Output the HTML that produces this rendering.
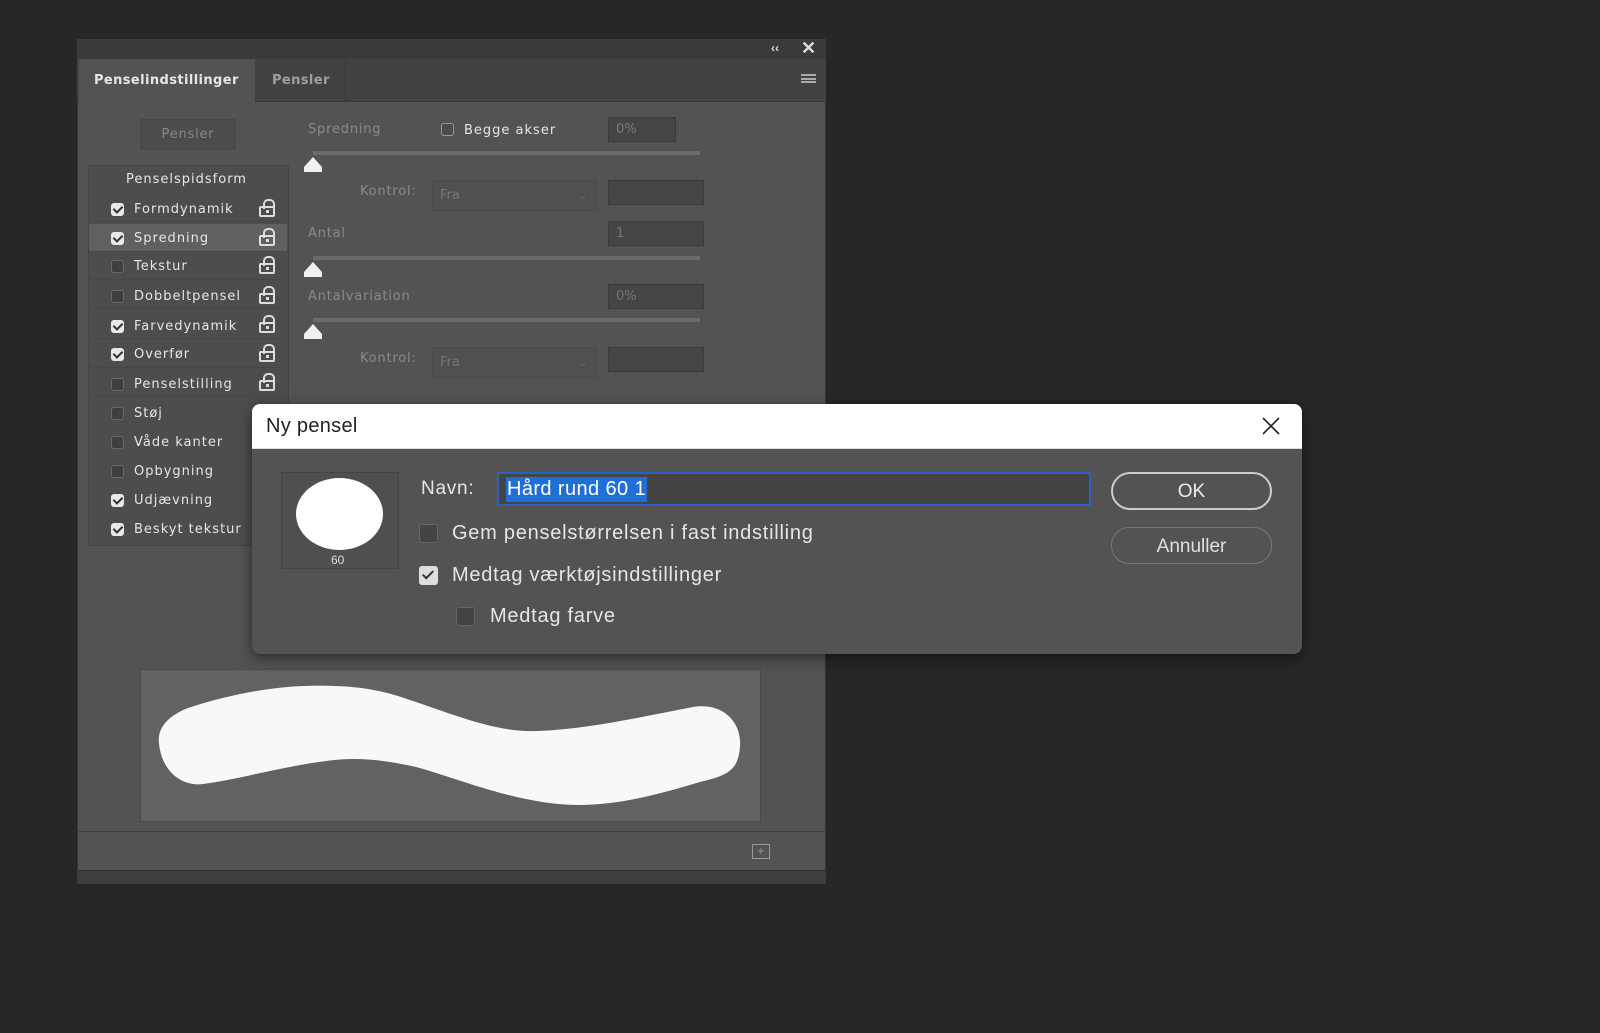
<!DOCTYPE html>
<html><head><meta charset="utf-8"><style>
*{margin:0;padding:0;box-sizing:border-box}
body{width:1600px;height:1033px;background:#272727;font-family:"Liberation Sans",sans-serif;position:relative;overflow:hidden}
.a{position:absolute}
.t{color:#e6e6e6;font-size:13px;letter-spacing:1px;white-space:nowrap;font-family:"DejaVu Sans",sans-serif;margin-top:1px}
.dim{color:#8a8a8a;font-size:13px;letter-spacing:0.8px;white-space:nowrap;font-family:"DejaVu Sans",sans-serif;margin-top:1px}
.cb{position:absolute;width:13px;height:13px;border-radius:3px;background:#3e3e3e;border:1px solid #6a6a6a}
.cbk{position:absolute;width:13px;height:13px;border-radius:3px;background:#e8e8e8}
.cbk:after{content:"";position:absolute;left:4px;top:1px;width:4px;height:7px;border:solid #333;border-width:0 2px 2px 0;transform:rotate(45deg)}
.row{position:absolute;left:89px;width:198px;height:28px;border-bottom:1px solid #474747}
.lock{position:absolute;left:164px;width:16px;height:11px;border:2px solid #ddd;border-radius:2px}
.lock:before{content:"";position:absolute;left:2px;top:-9px;width:8px;height:8px;border:2px solid #ddd;border-bottom:none;border-radius:5px 5px 0 0}
.lock:after{content:"";position:absolute;left:5px;top:2px;width:3px;height:3px;background:#ddd}
.inp{position:absolute;background:#454545;border:1px solid #3a3a3a;color:#777;font-size:13px;padding:4px 7px;font-family:"DejaVu Sans",sans-serif}
.track{position:absolute;left:313px;width:387px;height:4px;background:#6b6b6b}
.thumb{position:absolute;left:304px;width:0;height:0;border-left:9px solid transparent;border-right:9px solid transparent;border-bottom:10px solid #f0f0f0}
.thumb:after{content:"";position:absolute;left:-9px;top:10px;width:18px;height:5px;background:#f0f0f0}
.dt{position:absolute;color:#e6e6e6;font-size:20px;letter-spacing:0.75px;white-space:nowrap}
</style></head><body>
<div class="a" style="left:77px;top:39px;width:749px;height:845px;background:#535353;border:1px solid #333"></div>
<div class="a" style="left:77px;top:39px;width:749px;height:20px;background:#3b3b3b"></div>
<div class="a" style="left:771px;top:41px;color:#ddd;font-size:12px;font-weight:bold">‹‹</div>
<div class="a" style="left:801px;top:38px;color:#ddd;font-size:18px;font-weight:bold">✕</div>
<div class="a" style="left:77px;top:59px;width:749px;height:43px;background:#424242;border-bottom:1px solid #383838"></div>
<div class="a" style="left:79px;top:59px;width:176px;height:44px;background:#535353"></div>
<div class="a t" style="left:94px;top:72px;font-weight:bold;letter-spacing:0.4px">Penselindstillinger</div>
<div class="a" style="left:256px;top:59px;width:90px;height:43px;border-right:1px solid #383838"></div>
<div class="a t" style="left:272px;top:72px;color:#a0a0a0;font-weight:bold;letter-spacing:0.4px">Pensler</div>
<div class="a" style="left:801px;top:74px;width:15px;height:9px;border-top:2px solid #aaa;border-bottom:2px solid #aaa"><div style="margin-top:1.5px;height:2px;background:#aaa"></div></div>

<div class="a dim" style="left:140px;top:118px;width:96px;height:31px;background:#4c4c4c;border:1px solid #474747;color:#888;text-align:center;line-height:29px">Pensler</div>

<div class="a" style="left:88px;top:165px;width:201px;height:381px;background:#4d4d4d;border:1px solid #464646"></div>
<div class="a t" style="left:126px;top:171px">Penselspidsform</div>
<div class="row" style="top:194px"></div>
<div class="row" style="top:224px;background:#606060"></div>
<div class="row" style="top:252px"></div><div class="row" style="top:281px"></div><div class="row" style="top:311px"></div><div class="row" style="top:340px"></div><div class="row" style="top:369px"></div>

<div class="cbk" style="left:111px;top:203px"></div><div class="a t" style="left:134px;top:201px">Formdynamik</div><div class="lock" style="left:259px;top:206px"></div>
<div class="cbk" style="left:111px;top:232px"></div><div class="a t" style="left:134px;top:230px">Spredning</div><div class="lock" style="left:259px;top:235px"></div>
<div class="cb" style="left:111px;top:260px"></div><div class="a t" style="left:134px;top:258px">Tekstur</div><div class="lock" style="left:259px;top:263px"></div>
<div class="cb" style="left:111px;top:290px"></div><div class="a t" style="left:134px;top:288px">Dobbeltpensel</div><div class="lock" style="left:259px;top:293px"></div>
<div class="cbk" style="left:111px;top:320px"></div><div class="a t" style="left:134px;top:318px">Farvedynamik</div><div class="lock" style="left:259px;top:322px"></div>
<div class="cbk" style="left:111px;top:348px"></div><div class="a t" style="left:134px;top:346px">Overfør</div><div class="lock" style="left:259px;top:351px"></div>
<div class="cb" style="left:111px;top:378px"></div><div class="a t" style="left:134px;top:376px">Penselstilling</div><div class="lock" style="left:259px;top:380px"></div>
<div class="cb" style="left:111px;top:407px"></div><div class="a t" style="left:134px;top:405px">Støj</div>
<div class="cb" style="left:111px;top:436px"></div><div class="a t" style="left:134px;top:434px">Våde kanter</div>
<div class="cb" style="left:111px;top:465px"></div><div class="a t" style="left:134px;top:463px">Opbygning</div>
<div class="cbk" style="left:111px;top:494px"></div><div class="a t" style="left:134px;top:492px">Udjævning</div>
<div class="cbk" style="left:111px;top:523px"></div><div class="a t" style="left:134px;top:521px">Beskyt tekstur</div>

<div class="a dim" style="left:308px;top:121px">Spredning</div>
<div class="cb" style="left:441px;top:123px;background:#4a4a4a;border-color:#999"></div>
<div class="a t" style="left:464px;top:122px">Begge akser</div>
<div class="inp" style="left:608px;top:117px;width:68px;height:25px">0%</div>
<div class="track" style="top:151px"></div><div class="thumb" style="top:157px"></div>
<div class="a dim" style="left:360px;top:183px">Kontrol:</div>
<div class="inp" style="left:432px;top:180px;width:165px;height:31px;background:#505050;border-color:#4a4a4a;line-height:22px">Fra<span style="position:absolute;right:8px;color:#666">⌄</span></div>
<div class="inp" style="left:608px;top:180px;width:96px;height:25px"></div>
<div class="a dim" style="left:308px;top:225px">Antal</div>
<div class="inp" style="left:608px;top:221px;width:96px;height:25px">1</div>
<div class="track" style="top:256px"></div><div class="thumb" style="top:262px"></div>
<div class="a dim" style="left:308px;top:288px">Antalvariation</div>
<div class="inp" style="left:608px;top:284px;width:96px;height:25px">0%</div>
<div class="track" style="top:318px"></div><div class="thumb" style="top:324px"></div>
<div class="a dim" style="left:360px;top:350px">Kontrol:</div>
<div class="inp" style="left:432px;top:347px;width:165px;height:31px;background:#505050;border-color:#4a4a4a;line-height:22px">Fra<span style="position:absolute;right:8px;color:#666">⌄</span></div>
<div class="inp" style="left:608px;top:347px;width:96px;height:25px"></div>

<div class="a" style="left:140px;top:669px;width:621px;height:153px;background:#626262;border:1px solid #4a4a4a"></div>
<svg class="a" style="left:140px;top:669px" width="621" height="153"><path d="M19,74 C17,58 30,45 51,38 C100,22 150,15 194,17 C230,18 250,24 276,33 C320,48 360,64 398,62 C450,60 500,48 553,38 C585,33 602,55 600,78 C598,100 590,106 560,113 C520,125 480,136 439,136 C380,136 320,110 276,98 C240,90 215,88 186,92 C140,98 100,110 63,115 C40,118 21,100 19,74 Z" fill="#f8f8f8"/></svg>
<div class="a" style="left:77px;top:831px;width:749px;height:1px;background:#404040"></div>
<div class="a" style="left:752px;top:844px;width:18px;height:15px;border:1px solid #999;color:#999;font-size:12px;line-height:12px;text-align:center">+</div>
<div class="a" style="left:77px;top:870px;width:749px;height:14px;background:#3e3e3e;border-top:1px solid #303030"></div>

<div class="a" style="left:252px;top:404px;width:1050px;height:250px;background:#535353;border-radius:8px;box-shadow:0 4px 14px rgba(0,0,0,.5);overflow:hidden">
 <div style="height:45px;background:#fff;border-bottom:1px solid #ddd"></div>
</div>
<div class="a" style="left:266px;top:415px;font-size:20px;color:#222;letter-spacing:0.3px">Ny pensel</div>
<svg class="a" style="left:1261px;top:416px" width="20" height="20"><path d="M2,2 L18,18 M18,2 L2,18" stroke="#222" stroke-width="1.6"/></svg>
<div class="a" style="left:281px;top:472px;width:118px;height:97px;border:1px solid #444;background:#4f4f4f"></div>
<div class="a" style="left:296px;top:478px;width:87px;height:72px;border-radius:50%;background:#fff"></div>
<div class="a" style="left:331px;top:553px;color:#ddd;font-size:12px">60</div>
<div class="dt" style="left:421px;top:478px;font-size:19px">Navn:</div>
<div class="a" style="left:497px;top:472px;width:594px;height:34px;background:#444;border:2px solid #2a62c0"></div>
<div class="a" style="left:506px;top:477px;font-size:20px;letter-spacing:0.4px;color:#fff;background:#1f6fd6;padding:0 1px;line-height:25px">Hård rund 60 1</div>
<div class="a" style="left:1111px;top:472px;width:161px;height:38px;border:2px solid #ccc;border-radius:19px;color:#eee;font-size:19px;text-align:center;line-height:36px">OK</div>
<div class="a" style="left:1111px;top:527px;width:161px;height:37px;border:1px solid #777;border-radius:18px;color:#e0e0e0;font-size:19px;text-align:center;line-height:37px">Annuller</div>
<div class="cb" style="left:419px;top:524px;width:19px;height:19px;background:#444;border-color:#666"></div>
<div class="dt" style="left:452px;top:522px">Gem penselstørrelsen i fast indstilling</div>
<div class="a" style="left:419px;top:566px;width:19px;height:19px;border-radius:3px;background:#ddd"><span style="position:absolute;left:6px;top:2px;width:6px;height:11px;border:solid #333;border-width:0 2.5px 2.5px 0;transform:rotate(45deg)"></span></div>
<div class="dt" style="left:452px;top:564px">Medtag værktøjsindstillinger</div>
<div class="cb" style="left:456px;top:607px;width:19px;height:19px;background:#444;border-color:#666"></div>
<div class="dt" style="left:490px;top:605px">Medtag farve</div>
</body></html>
